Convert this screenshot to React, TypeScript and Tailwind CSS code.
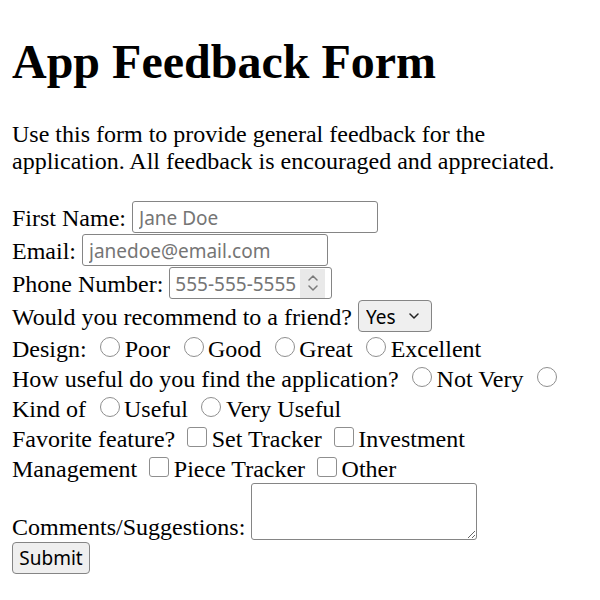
import React from "react";

const control =
  "font-['Noto_Sans','Liberation_Sans',sans-serif] text-[19px] leading-[normal] text-black";

const textField =
  "box-border h-[32px] my-[0.5px] rounded-[3px] border border-[#858585] bg-white px-[6px] pt-[3px] pb-[1px] align-baseline outline-none placeholder:text-[#757575] " +
  control;

const radio =
  "appearance-none inline-block box-border w-[20px] h-[20px] rounded-full border border-[#8f8f8f] bg-white ml-[7.5px] mr-[4.5px] mt-[4px] mb-0 align-baseline";

const checkbox =
  "appearance-none inline-block box-border w-[20px] h-[20px] rounded-[3px] border border-[#8f8f8f] bg-white ml-[6px] mr-[4.5px] mt-[4px] mb-0 align-baseline";

function Chevron({ up = false, className = "" }: { up?: boolean; className?: string }) {
  return (
    <svg width="10" height="6" viewBox="0 0 10 6" className={className} aria-hidden="true">
      <path
        d={up ? "M1 5 L5 1 L9 5" : "M1 1 L5 5 L9 1"}
        fill="none"
        stroke="currentColor"
        strokeWidth="1.5"
        strokeLinecap="round"
        strokeLinejoin="round"
      />
    </svg>
  );
}

const designOptions = ["Poor", "Good", "Great", "Excellent"];
const usefulOptions = ["Not Very", "Kind of", "Useful", "Very Useful"];
const features = ["Set Tracker", "Investment Management", "Piece Tracker", "Other"];

export default function App() {
  return (
    <div className="min-h-screen bg-white px-[12px] pt-[34px] font-['Liberation_Serif','Times_New_Roman',serif] text-[24px] leading-[normal] text-black">
      <h1 className="mb-[32px] text-[48px] font-bold leading-[normal]">App Feedback Form</h1>
      <p className="mb-[24px]">
        Use this form to provide general feedback for the application. All feedback is encouraged and
        appreciated.
      </p>

      <form className="pt-[1.5px]" onSubmit={(e) => e.preventDefault()}>
        <div>
          <label htmlFor="name">First Name:</label>{" "}
          <input id="name" type="text" placeholder="Jane Doe" className={`${textField} w-[246px]`} />
        </div>
        <div>
          <label htmlFor="email">Email:</label>{" "}
          <input id="email" type="email" placeholder="janedoe@email.com" className={`${textField} w-[246px]`} />
        </div>
        <div>
          <label htmlFor="phone">Phone Number:</label>{" "}
          <span className="inline-flex items-center box-border h-[32px] w-[163px] my-[0.5px] rounded-[3px] border border-[#858585] bg-white align-baseline">
            <input
              id="phone"
              type="text"
              inputMode="numeric"
              placeholder="555-555-5555"
              className={`box-border h-[30px] min-w-0 flex-1 bg-transparent pl-[5px] pr-0 pt-[3px] pb-[1px] outline-none placeholder:text-[#757575] ${control}`}
            />
            <span className="mr-[6px] flex h-[29px] w-[25px] flex-col items-center justify-center gap-[4px] bg-[#e9e9e9] text-[#7a7a7a]">
              <Chevron up />
              <Chevron />
            </span>
          </span>
        </div>
        <div>
          <label htmlFor="recommend">Would you recommend to a friend?</label>{" "}
          <span className="inline-flex items-center box-border h-[32px] w-[74px] my-[0.5px] rounded-[4px] border border-[#858585] bg-[#efefef] align-baseline">
            <select
              id="recommend"
              defaultValue="yes"
              className={`appearance-none bg-transparent pl-[7px] pr-0 pt-[3px] pb-[1px] outline-none ${control}`}
            >
              <option value="yes">Yes</option>
              <option value="no">No</option>
            </select>
            <Chevron className="ml-auto mr-[12px] text-[#222]" />
          </span>
        </div>

        <div>
          Design:{" "}
          {designOptions.map((opt, i) => (
            <React.Fragment key={opt}>
              {i > 0 && " "}
              <input id={`design-${i}`} type="radio" name="design" className={radio} />
              <label htmlFor={`design-${i}`}>{opt}</label>
            </React.Fragment>
          ))}
        </div>

        <div>
          How useful do you find the application?{" "}
          {usefulOptions.map((opt, i) => (
            <React.Fragment key={opt}>
              {i > 0 && " "}
              <input id={`useful-${i}`} type="radio" name="useful" className={radio} />
              <label htmlFor={`useful-${i}`}>{opt}</label>
            </React.Fragment>
          ))}
        </div>

        <div>
          Favorite feature?{" "}
          {features.map((opt, i) => (
            <React.Fragment key={opt}>
              {i > 0 && " "}
              <input id={`feature-${i}`} type="checkbox" className={checkbox} />
              <label htmlFor={`feature-${i}`}>{opt}</label>
            </React.Fragment>
          ))}
        </div>

        <div>
          <label htmlFor="comments">Comments/Suggestions:</label>{" "}
          <textarea
            id="comments"
            className={`box-border h-[57px] w-[226px] resize rounded-[3px] border border-[#858585] bg-white px-[3px] align-text-bottom outline-none ${control}`}
          />
        </div>

        <div>
          <button
            type="submit"
            className={`mt-[1px] box-border h-[32px] w-[78px] rounded-[4px] border border-[#858585] bg-[#efefef] ${control}`}
          >
            Submit
          </button>
        </div>
      </form>
    </div>
  );
}
